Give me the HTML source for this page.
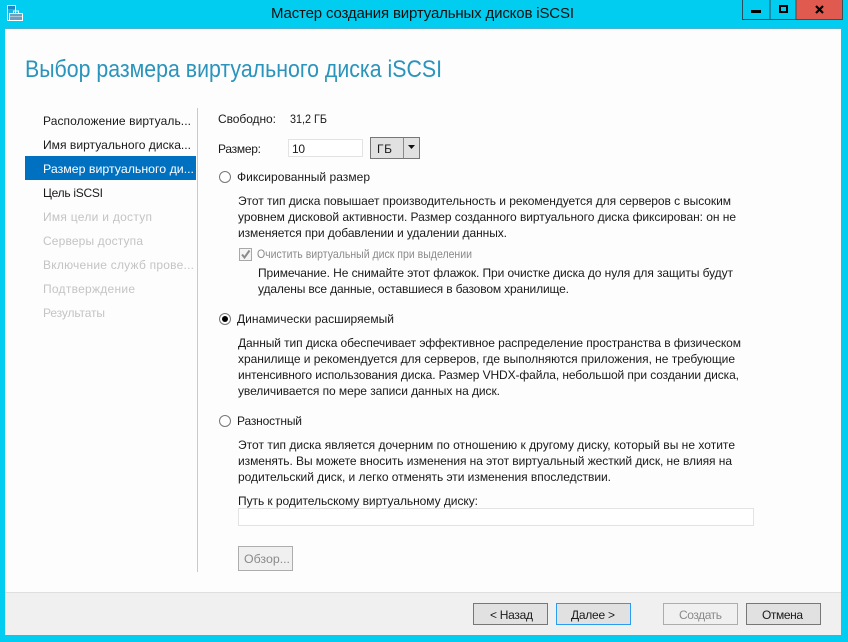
<!DOCTYPE html>
<html><head><meta charset="utf-8"><style>
html,body{margin:0;padding:0;width:848px;height:642px;overflow:hidden;background:#00cdf0}
svg{display:block}
text{font-family:"Liberation Sans",sans-serif;font-size:12px;fill:#1a1a1a;white-space:pre}
.d{fill:#c4c4c4}.g{fill:#8a8a8a}
</style></head><body>
<svg width="848" height="642" viewBox="0 0 848 642" xmlns="http://www.w3.org/2000/svg">
<rect width="848" height="642" fill="#00cdf0"/>
<rect x="5" y="28" width="836" height="1" fill="#4fb0cf"/>
<rect x="5" y="29" width="836" height="606" fill="#fdfdfd"/>
<rect x="5" y="592" width="836" height="43" fill="#f0f0f0"/>
<rect x="5" y="592" width="836" height="1" fill="#dfdfdf"/>

<!-- app icon -->
<rect x="7.500" y="5.500" width="8" height="15" fill="#19b4e6" stroke="#fff"/>
<rect x="8" y="6" width="7" height="3" fill="#1f86c4"/>
<path d="M13.500 13.500v-2.500h5v2.500" stroke="#e8f6fb" fill="none"/>
<rect x="9.500" y="13.500" width="13" height="7" fill="#6f9fbd" stroke="#fff"/>
<path d="M10 16.500h12" stroke="#a9c8da" fill="none"/>

<!-- title -->
<text x="271" y="18" style="font-size:15px;fill:#111" textLength="303">Мастер создания виртуальных дисков iSCSI</text>

<!-- window buttons -->
<rect x="742.500" y="-1" width="27.500" height="20.500" fill="#00cdf0" stroke="#2b4f5f"/>
<rect x="770" y="-1" width="26" height="20.500" fill="#00cdf0" stroke="#2b4f5f"/>
<rect x="796" y="-1" width="46.500" height="20.500" fill="#e05a50" stroke="#3c4f55"/>
<rect x="751" y="10" width="10" height="3" fill="#000"/>
<rect x="780" y="6" width="7" height="6" fill="none" stroke="#000" stroke-width="2"/>
<path d="M816 6l7 7M823 6l-7 7" stroke="#000" stroke-width="2.200" fill="none"/>

<!-- heading -->
<text x="25" y="77" style="font-size:24px;fill:#2a94bc" textLength="417" lengthAdjust="spacingAndGlyphs">Выбор размера виртуального диска iSCSI</text>

<!-- sidebar -->
<rect x="197" y="108" width="1" height="464" fill="#c9c9c9"/>
<rect x="25" y="156" width="171" height="24" fill="#0070c0"/>
<text x="43" y="125" textLength="148">Расположение виртуаль...</text>
<text x="43" y="149" textLength="148" lengthAdjust="spacingAndGlyphs">Имя виртуального диска...</text>
<text x="43" y="173" style="fill:#fff" textLength="151" lengthAdjust="spacingAndGlyphs">Размер виртуального ди...</text>
<text x="43" y="197" textLength="60">Цель iSCSI</text>
<text x="43" y="221" class="d" textLength="109">Имя цели и доступ</text>
<text x="43" y="245" class="d" textLength="100">Серверы доступа</text>
<text x="43" y="269" class="d" textLength="151">Включение служб прове...</text>
<text x="43" y="293" class="d" textLength="92">Подтверждение</text>
<text x="43" y="317" class="d" textLength="62">Результаты</text>

<!-- size -->
<text x="218" y="123" textLength="58">Свободно:</text>
<text x="290" y="123" textLength="37" lengthAdjust="spacingAndGlyphs">31,2 ГБ</text>
<text x="218" y="153" textLength="43">Размер:</text>
<rect x="288.500" y="139.500" width="74" height="17" fill="#fff" stroke="#e3e3e3"/>
<text x="292" y="153" textLength="13">10</text>
<rect x="370.500" y="137.500" width="49" height="21" fill="#e1e1e1" stroke="#777"/>
<rect x="403" y="138" width="1" height="20" fill="#8a8a8a"/>
<text x="377" y="153" textLength="15">ГБ</text>
<path d="M408 145h7l-3.500 4z" fill="#111"/>

<!-- radio 1 -->
<circle cx="225" cy="177" r="5.500" fill="#fff" stroke="#777"/>
<text x="237" y="181" textLength="133">Фиксированный размер</text>
<text x="238" y="205" textLength="493">Этот тип диска повышает производительность и рекомендуется для серверов с высоким</text>
<text x="238" y="221" textLength="498">уровнем дисковой активности. Размер созданного виртуального диска фиксирован: он не</text>
<text x="238" y="237" textLength="269">изменяется при добавлении и удалении данных.</text>
<rect x="239.500" y="248.500" width="12" height="12" fill="#f4f4f4" stroke="#a8a8a8"/>
<path d="M242 254.500l2.500 3 5-7" fill="none" stroke="#8a8a8a" stroke-width="2"/>
<text x="257" y="258" class="g" textLength="215" lengthAdjust="spacingAndGlyphs">Очистить виртуальный диск при выделении</text>
<text x="258" y="277" textLength="475">Примечание. Не снимайте этот флажок. При очистке диска до нуля для защиты будут</text>
<text x="258" y="293" textLength="311">удалены все данные, оставшиеся в базовом хранилище.</text>

<!-- radio 2 -->
<circle cx="225" cy="319" r="5.500" fill="#fff" stroke="#777"/>
<circle cx="225" cy="319" r="3" fill="#000"/>
<text x="237" y="323" textLength="157">Динамически расширяемый</text>
<text x="238" y="347" textLength="503">Данный тип диска обеспечивает эффективное распределение пространства в физическом</text>
<text x="238" y="363" textLength="497">хранилище и рекомендуется для серверов, где выполняются приложения, не требующие</text>
<text x="238" y="379" textLength="501">интенсивного использования диска. Размер VHDX-файла, небольшой при создании диска,</text>
<text x="238" y="395" textLength="262">увеличивается по мере записи данных на диск.</text>

<!-- radio 3 -->
<circle cx="225" cy="421" r="5.500" fill="#fff" stroke="#777"/>
<text x="237" y="425" textLength="65">Разностный</text>
<text x="238" y="449" textLength="497">Этот тип диска является дочерним по отношению к другому диску, который вы не хотите</text>
<text x="238" y="465" textLength="494">изменять. Вы можете вносить изменения на этот виртуальный жесткий диск, не влияя на</text>
<text x="238" y="481" textLength="373">родительский диск, и легко отменять эти изменения впоследствии.</text>
<text x="238" y="505" textLength="240">Путь к родительскому виртуальному диску:</text>
<rect x="238.500" y="508.500" width="515" height="17" fill="#fff" stroke="#e3e3e3"/>
<rect x="238.500" y="546.500" width="54" height="24" fill="#f0f0f0" stroke="#adadad"/>
<text x="244" y="563" class="g" textLength="46" lengthAdjust="spacingAndGlyphs">Обзор...</text>

<!-- footer buttons -->
<rect x="473.500" y="603.500" width="74" height="21" fill="#e1e1e1" stroke="#777"/>
<text x="490" y="619" textLength="43">&lt; Назад</text>
<rect x="556.500" y="603.500" width="74" height="21" fill="#e1e1e1" stroke="#2b9cf2"/>
<text x="571" y="619" textLength="44">Далее &gt;</text>
<rect x="663.500" y="603.500" width="74" height="21" fill="#f0f0f0" stroke="#adadad"/>
<text x="679" y="619" class="g" textLength="43">Создать</text>
<rect x="746.500" y="603.500" width="74" height="21" fill="#e1e1e1" stroke="#777"/>
<text x="762" y="619" textLength="41">Отмена</text>
</svg>
</body></html>
